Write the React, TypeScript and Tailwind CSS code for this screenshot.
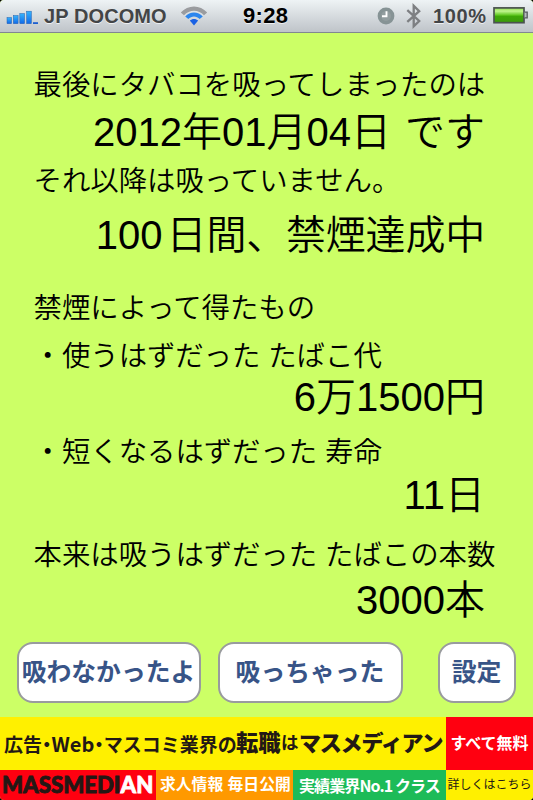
import type { ReactNode } from "react";

function SignalIcon() {
  return (
    <svg width="33" height="16" viewBox="0 0 33 16">
      <defs>
        <linearGradient id="signal" x1="0" y1="0" x2="0" y2="1">
          <stop offset="0" stopColor="#35b4fb" />
          <stop offset="1" stopColor="#1168e8" />
        </linearGradient>
      </defs>
      <g fill="url(#signal)" stroke="#2a62ae" strokeWidth="0.5">
        <rect x="1" y="7.5" width="4.6" height="6.2" />
        <rect x="7.3" y="5.5" width="4.8" height="8.2" />
        <rect x="13.8" y="3.5" width="4.8" height="10.2" />
        <rect x="20.6" y="1.2" width="4.8" height="12.5" />
      </g>
      <rect x="27" y="12.2" width="5" height="1.8" fill="#1d5fd0" />
    </svg>
  )
}

function WifiIcon() {
  return (
    <svg width="28" height="21" viewBox="0 0 28 21" fill="none">
      <path d="M0.8 6.6C8 -1.6 20 -1.6 27.2 6.6L24 9.2C18.5 3.2 9.5 3.2 4 9.2Z" fill="#9a9c9f" />
      <path d="M5.2 10.4C10 5.2 18 5.2 22.8 10.4L19.7 13C16.5 9.6 11.5 9.6 8.3 13Z" fill="#2b86ee" />
      <path d="M9.8 14.6C12.2 12.3 15.8 12.3 18.2 14.6L14 19.6Z" fill="#1a62e4" />
    </svg>
  )
}

function ClockIcon() {
  return (
    <svg width="18" height="18" viewBox="0 0 18 18">
      <circle cx="9" cy="9" r="8.4" fill="#869395" />
      <circle cx="9" cy="9" r="5" fill="#929d9f" />
      <path d="M9.5 4.2V9.3H5" fill="none" stroke="#ffffff" strokeWidth="1.9" />
    </svg>
  )
}

function BluetoothIcon() {
  return (
    <svg width="16" height="26" viewBox="0 0 16 26">
      <path
        d="M1.3 7.2L13.2 18L7.7 23.3V2.8L13.2 8.1L1.3 18.9"
        fill="none"
        stroke="#7d7f82"
        strokeWidth="2.3"
      />
    </svg>
  )
}

function BatteryIcon() {
  return (
    <svg width="36" height="17" viewBox="0 0 36 17">
      <defs>
        <linearGradient id="battery" x1="0" y1="0" x2="0" y2="1">
          <stop offset="0" stopColor="#8fdc4c" />
          <stop offset="0.22" stopColor="#c0f58e" />
          <stop offset="0.5" stopColor="#5cc51c" />
          <stop offset="0.55" stopColor="#3ea806" />
          <stop offset="1" stopColor="#3c9a0c" />
        </linearGradient>
      </defs>
      <rect x="1" y="0.9" width="30" height="14.8" fill="url(#battery)" stroke="#4b5350" strokeWidth="1.7" />
      <path d="M31.6 5.2H34.2V10.8H31.6" fill="#b7bcbf" stroke="#555b5e" strokeWidth="1.3" />
    </svg>
  )
}

function StatusBar() {
  return (
    <div className="flex h-[33px] shrink-0 border-b border-[#818891] bg-linear-to-b from-[#eef3f5] to-[#bfc4c9] font-bold text-[#434547] [text-shadow:0_1px_0_rgba(255,255,255,0.7)]">
      <div className="w-[6px] shrink-0" />
      <div className="w-[38px] shrink-0 pt-[10px]"><SignalIcon /></div>
      <div className="w-[136px] shrink-0 text-[20px] leading-[33px] tracking-[0.1px] whitespace-nowrap">JP DOCOMO</div>
      <div className="w-[63px] shrink-0 pt-[6px]"><WifiIcon /></div>
      <div className="w-[134px] shrink-0 text-[22px] leading-[32px] tracking-[0.3px] text-black">9:28</div>
      <div className="w-[29px] shrink-0 pt-[7px]"><ClockIcon /></div>
      <div className="w-[27px] shrink-0 pt-[3px]"><BluetoothIcon /></div>
      <div className="w-[60px] shrink-0 text-[20px] leading-[33px] tracking-[0.6px]">100%</div>
      <div className="pt-[7px]"><BatteryIcon /></div>
    </div>
  )
}

function Label({ className, children }: { className: string; children: ReactNode }) {
  return <p className={`-mb-px pt-px text-[28.4px] whitespace-pre ${className}`}>{children}</p>
}

function Value({ className, children }: { className: string; children: ReactNode }) {
  return <p className={`pr-[48px] text-right text-[40px] whitespace-pre ${className}`}>{children}</p>
}

function ActionButton({ className, children }: { className: string; children: ReactNode }) {
  return (
    <button
      className={`flex h-[61px] shrink-0 items-center justify-center rounded-[16px] border-2 border-[#999b9e] bg-white pr-px text-[24.8px] font-bold whitespace-nowrap text-[#385487] ${className}`}
    >
      {children}
    </button>
  )
}

function AdBanner() {
  return (
    <div className="h-[83px] shrink-0 overflow-hidden whitespace-nowrap text-[#231815]">
      <div className="flex h-[53px]">
        <div className="flex w-[446px] shrink-0 items-center bg-[#fff000] pl-[4px]">
          <span className="w-[232px] shrink-0 font-['Noto_Sans_CJK_JP',sans-serif] text-[19px] font-bold [font-feature-settings:'halt']">広告・<span className="text-[20px]">Web</span>・マスコミ業界の</span>
          <span className="w-[45px] shrink-0 text-[22.3px] font-black">転職</span>
          <span className="w-[18px] shrink-0 text-[17.5px] font-bold">は</span>
          <span className="text-[22px] font-black tracking-[-1.2px]">マスメディアン</span>
        </div>
        <div className="flex flex-1 items-center justify-center bg-[#ff0010] text-[16px] font-bold text-white">すべて無料</div>
      </div>
      <div className="flex h-[30px]">
        <div className="flex w-[156px] shrink-0 items-center bg-[#ff0010] pl-[2px] font-[Lato,'Liberation_Sans',sans-serif] text-[22.2px] font-black [-webkit-text-stroke:0.8px_currentColor]">
          MASSMEDI<span className="text-white">AN</span>
        </div>
        <div className="flex w-[137px] shrink-0 items-center bg-[#ff9900] pl-[4px] text-[15.8px] font-bold text-white">求人情報 毎日公開</div>
        <div className="flex w-[153px] shrink-0 items-center bg-[#1dbb58] pl-[6px] font-['Noto_Sans_CJK_JP',sans-serif] text-[16px] font-bold tracking-[-0.9px] text-white">実績業界No.1 クラス</div>
        <div className="flex flex-1 items-center justify-center bg-[#fff000] text-[12px]">詳しくはこちら</div>
      </div>
    </div>
  )
}

export default function App() {
  return (
    <div className="w-[533px] bg-black">
      <div className="flex h-[800px] flex-col overflow-hidden rounded-[4px] bg-[#ccff66] font-['Liberation_Sans','Noto_Sans_CJK_JP',sans-serif] text-black">
        <StatusBar />

        <main className="flex h-[684px] shrink-0 flex-col pt-[27px]">
          <div className="pl-[33.5px] font-[350]">
            <Label className="leading-[48px]">最後にタバコを吸ってしまったのは</Label>
            <Value className="leading-[48px]">2012年01月04日<span className="ml-[14px]">です</span></Value>
            <Label className="leading-[49px]">それ以降は吸っていません。</Label>
            <Value className="leading-[61px]">100<span className="ml-[4px] tracking-[-0.2px]">日間、禁煙達成中</span></Value>

            <Label className="mt-[17px] leading-[48px]">禁煙によって得たもの</Label>
            <Label className="leading-[49px]">・使うはずだった たばこ代</Label>
            <Value className="leading-[34px]">6万1500円</Value>
            <Label className="mt-[13px] leading-[49px]">・短くなるはずだった 寿命</Label>
            <Value className="leading-[38px]">11日</Value>
            <Label className="mt-[16px] leading-[48px]">本来は吸うはずだった たばこの本数</Label>
            <Value className="leading-[44px]">3000本</Value>
          </div>

          <div className="mt-[20px] flex pl-[17px]">
            <ActionButton className="w-[184px]">吸わなかったよ</ActionButton>
            <ActionButton className="ml-[17px] w-[185px]">吸っちゃった</ActionButton>
            <ActionButton className="ml-[35px] w-[78px]">設定</ActionButton>
          </div>
        </main>

        <AdBanner />
      </div>
    </div>
  )
}
